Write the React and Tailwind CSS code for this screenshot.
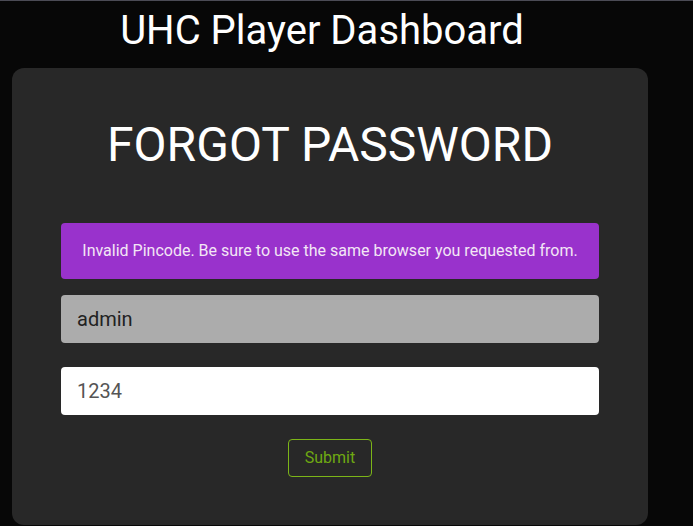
import React, { useState } from "react";

export default function App() {
  const [form, setForm] = useState({ username: "admin", pincode: "1234" });

  const handleChange = (event) => {
    const { name, value } = event.target;
    setForm((prev) => ({ ...prev, [name]: value }));
  };

  return (
    <div
      className="w-[693px] h-[526px] overflow-hidden bg-[#070707] flex flex-col"
      style={{ fontFamily: "Roboto, 'Liberation Sans', sans-serif" }}
    >
      <div className="h-[1px] bg-[#4b4b55]" />
      {/* Header */}
      <div className="h-[67px] pr-[49px] flex justify-center">
        <h1 className="text-[40px] leading-[60px] text-white font-normal">UHC Player Dashboard</h1>
      </div>

      {/* Card */}
      <div className="ml-[12px] w-[636px] h-[457px] bg-[#282828] rounded-[12px] px-[49px] flex flex-col">
        <h2 className="mt-[47px] text-[48px] leading-[60px] text-white text-center font-normal">
          FORGOT PASSWORD
        </h2>

        <form className="mt-[48px] flex flex-col" onSubmit={(e) => e.preventDefault()}>
          <div className="h-[56px] bg-[#9932cc] rounded-[4px] flex items-center justify-center text-[16px] text-[#f3e6f5]">
            Invalid Pincode. Be sure to use the same browser you requested from.
          </div>

          <input
            name="username"
            value={form.username}
            onChange={handleChange}
            className="mt-[16px] h-[48px] bg-[#acacac] rounded-[4px] px-[16px] text-[20px] text-[#222] outline-none"
          />

          <input
            name="pincode"
            value={form.pincode}
            onChange={handleChange}
            className="mt-[24px] h-[48px] bg-white rounded-[4px] px-[16px] text-[20px] text-[#555] outline-none"
          />

          <div className="mt-[24px] flex justify-center">
            <button
              type="submit"
              className="w-[84px] h-[38px] border border-[#7cb518] rounded-[4px] text-[16px] text-[#6fa812] bg-transparent"
            >
              Submit
            </button>
          </div>
        </form>
      </div>
    </div>
  );
}
